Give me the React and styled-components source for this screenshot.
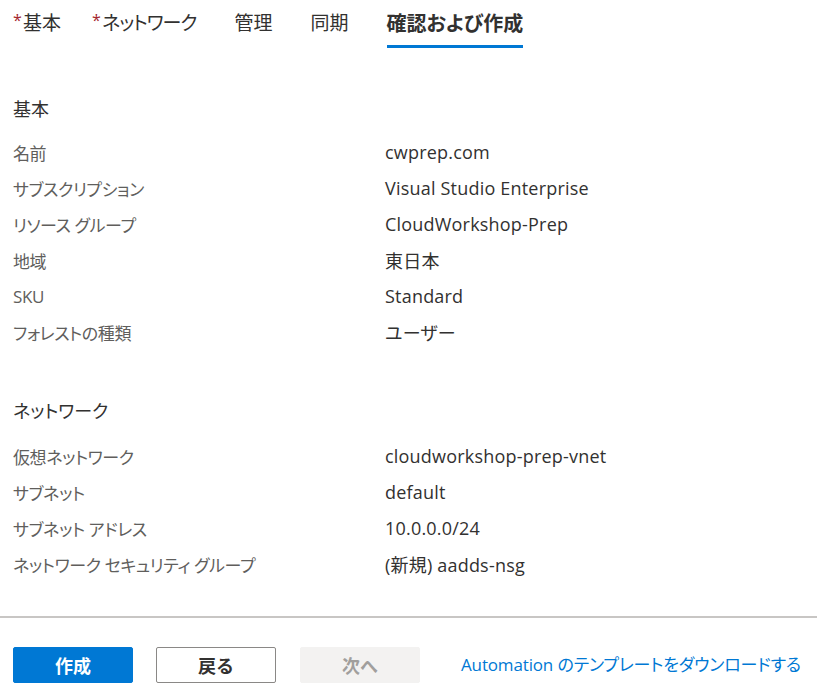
import React from "react";
import styled, { createGlobalStyle } from "styled-components";

const Global = createGlobalStyle`
  html, body { margin: 0; padding: 0; background: #ffffff; }
  body {
    font-family: "Open Sans", "Noto Sans CJK JP", sans-serif;
    color: #323130;
    font-feature-settings: "palt";
  }
  * { box-sizing: border-box; }
`;

const Page = styled.div`
  width: 817px;
  height: 694px;
  display: flex;
  flex-direction: column;
  overflow: hidden;
`;

const TabBar = styled.nav`
  flex: none;
  display: flex;
  align-items: stretch;
  height: 48px;
  padding-left: 23px;
  gap: 38px;
`;

const Tab = styled.div`
  position: relative;
  display: flex;
  align-items: center;
  padding-bottom: 4px;
  font-size: ${(p) => (p.$active ? 20 : 19)}px;
  font-weight: ${(p) => (p.$active ? 700 : 400)};
  letter-spacing: ${(p) => (p.$tight ? -1 : 0)}px;
  color: #323130;
  white-space: nowrap;
  margin-left: ${(p) => p.$ml || 0}px;
  &::after {
    content: "";
    display: ${(p) => (p.$active ? "block" : "none")};
    position: absolute;
    left: 0;
    right: 0;
    bottom: 0;
    height: 3px;
    background: #0078d4;
  }
`;

const Star = styled.span`
  position: absolute;
  left: -10px;
  top: 9px;
  color: #a4262c;
  font-size: 16px;
  font-weight: 400;
  letter-spacing: 0;
`;

const Content = styled.main`
  flex: 1 1 auto;
  min-height: 0;
  padding: 48px 13px 0 13px;
`;

const Section = styled.section`
  margin-bottom: 48px;
  &:last-child {
    margin-bottom: 0;
  }
`;

const Heading = styled.h2`
  margin: 0 0 ${(p) => p.$mb}px 0;
  height: 26px;
  line-height: 26px;
  font-size: 18px;
  font-weight: 400;
  color: #323130;
`;

const Row = styled.div`
  display: grid;
  grid-template-columns: 372px 1fr;
  height: 36px;
  align-items: center;
`;

const Label = styled.div`
  color: #605e5c;
  font-size: 17px;
  letter-spacing: -0.4px;
  white-space: nowrap;
`;

const Value = styled.div`
  color: #323130;
  font-size: 18px;
  letter-spacing: 0.2px;
  white-space: nowrap;
`;

const Footer = styled.footer`
  flex: none;
  border-top: 2px solid #c8c6c4;
  padding: 29px 13px 0 13px;
  height: 78px;
  display: flex;
  align-items: flex-start;
`;

const Button = styled.button`
  flex: none;
  width: 120px;
  height: 36px;
  margin-right: ${(p) => p.$mr}px;
  border-radius: 2px;
  font-family: inherit;
  font-size: 18px;
  font-weight: 600;
  border: 1px solid
    ${(p) =>
      p.$variant === "primary"
        ? "#0078d4"
        : p.$variant === "disabled"
        ? "#f3f2f1"
        : "#8a8886"};
  background: ${(p) =>
    p.$variant === "primary"
      ? "#0078d4"
      : p.$variant === "disabled"
      ? "#f3f2f1"
      : "#ffffff"};
  color: ${(p) =>
    p.$variant === "primary"
      ? "#ffffff"
      : p.$variant === "disabled"
      ? "#a19f9d"
      : "#323130"};
  padding: 0;
  cursor: pointer;
`;

const Link = styled.a`
  margin-left: 41px;
  line-height: 36px;
  font-size: 17px;
  letter-spacing: -0.15px;
  color: #0078d4;
  text-decoration: none;
  white-space: nowrap;
`;

const basics = [
  ["名前", "cwprep.com"],
  ["サブスクリプション", "Visual Studio Enterprise"],
  ["リソース グループ", "CloudWorkshop-Prep"],
  ["地域", "東日本"],
  ["SKU", "Standard"],
  ["フォレストの種類", "ユーザー"],
];

const network = [
  ["仮想ネットワーク", "cloudworkshop-prep-vnet"],
  ["サブネット", "default"],
  ["サブネット アドレス", "10.0.0.0/24"],
  ["ネットワーク セキュリティ グループ", "(新規) aadds-nsg"],
];

export default function App() {
  return (
    <Page>
      <Global />
      <TabBar>
        <Tab>
          <Star>*</Star>基本
        </Tab>
        <Tab $ml={3} $tight>
          <Star>*</Star>ネットワーク
        </Tab>
        <Tab>管理</Tab>
        <Tab>同期</Tab>
        <Tab $active>確認および作成</Tab>
      </TabBar>
      <Content>
        <Section>
          <Heading $mb={12}>基本</Heading>
          {basics.map(([l, v]) => (
            <Row key={l}>
              <Label>{l}</Label>
              <Value>{v}</Value>
            </Row>
          ))}
        </Section>
        <Section>
          <Heading $mb={14}>ネットワーク</Heading>
          {network.map(([l, v]) => (
            <Row key={l}>
              <Label>{l}</Label>
              <Value>{v}</Value>
            </Row>
          ))}
        </Section>
      </Content>
      <Footer>
        <Button $variant="primary" $mr={23}>作成</Button>
        <Button $mr={24}>戻る</Button>
        <Button $variant="disabled" $mr={0}>次へ</Button>
        <Link href="#">Automation のテンプレートをダウンロードする</Link>
      </Footer>
    </Page>
  );
}
